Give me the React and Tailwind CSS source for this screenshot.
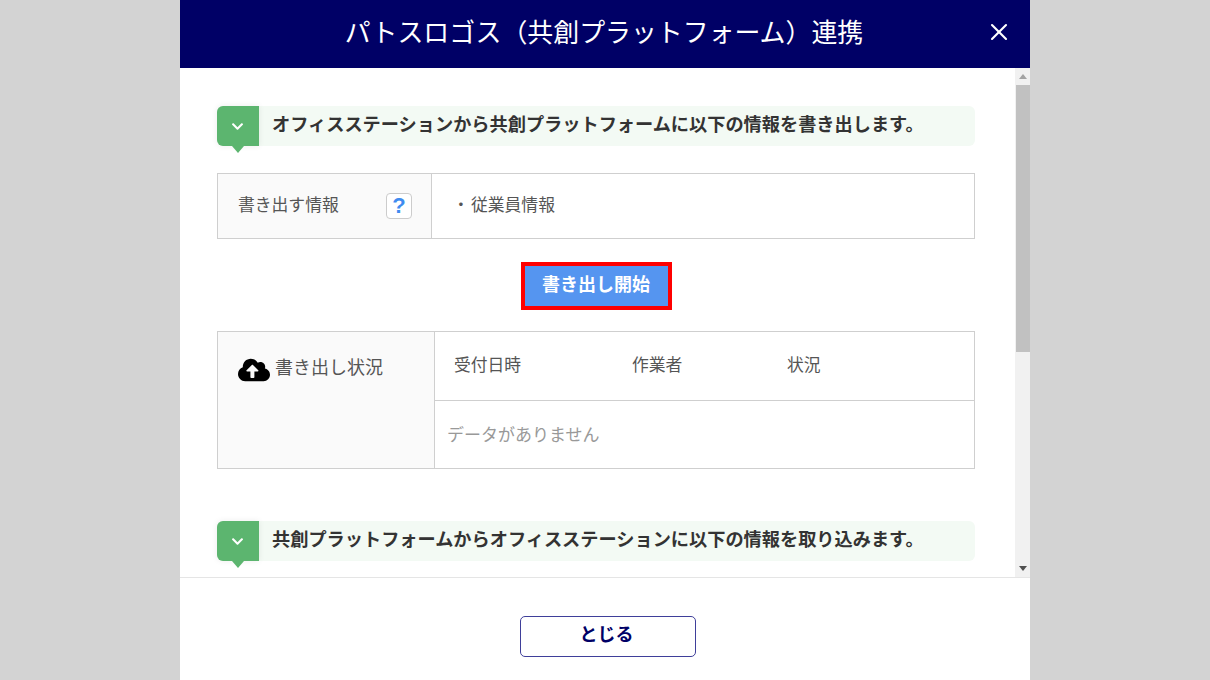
import { FaChevronDown, FaCloudUploadAlt } from "react-icons/fa";
import { X } from "lucide-react";

const font = "font-['Noto_Sans_CJK_JP','Noto_Sans',sans-serif]";

function SectionHead({ children }) {
  return (
    <div className="flex items-center h-10 rounded-md bg-[#f3faf4]">
      <div className="relative flex items-center justify-center w-[41.5px] h-10 rounded-l-md bg-[#5cb56f] shadow-[0_0_6px_rgba(0,0,0,0.08)]">
        <FaChevronDown className="text-white text-[13px]" />
        <div className="absolute left-[15px] top-10 w-0 h-0 border-x-[6px] border-x-transparent border-t-[7px] border-t-[#5cb56f]" />
      </div>
      <div className="ml-[13.5px] pb-[5px] text-[18.2px] font-bold text-[#333] leading-none">
        {children}
      </div>
    </div>
  );
}

function Scrollbar() {
  return (
    <div className="flex flex-col w-[15px] bg-[#f1f1f1]">
      <div className="flex items-center justify-center h-[17px] bg-[#f1f1f1]">
        <div className="w-0 h-0 border-x-4 border-x-transparent border-b-[5px] border-b-[#a3a3a3]" />
      </div>
      <div className="h-[267px] ml-px bg-[#c1c1c1]" />
      <div className="flex-1" />
      <div className="flex items-center justify-center h-[17px]">
        <div className="w-0 h-0 border-x-4 border-x-transparent border-t-[5px] border-t-[#505050]" />
      </div>
    </div>
  );
}

export default function App() {
  return (
    <div className={`flex justify-center w-full h-[680px] overflow-hidden bg-[#d3d3d3] ${font}`}>
      <div className="flex flex-col w-[850px] h-[680px] bg-white">
        <header className="flex items-center justify-center relative h-[68px] shrink-0 pb-[6px] pr-[2px] bg-[#000066]">
          <h1 className="text-[25.9px] font-normal text-white leading-none">
            パトスロゴス（共創プラットフォーム）連携
          </h1>
          <X className="absolute right-[17px] top-[18px] text-white" size={28} strokeWidth={1.8} />
        </header>

        <div className="flex h-[509px] shrink-0">
          <div className="flex-1 min-w-0 overflow-hidden pt-[38px] pl-[37px] pr-[40px]">
            <SectionHead>オフィスステーションから共創プラットフォームに以下の情報を書き出します。</SectionHead>

            <div className="flex h-[66px] mt-[27px] border border-[#cfcfcf] text-[16.8px] text-[#555]">
              <div className="flex items-center justify-between w-[214px] pl-5 pr-[19px] bg-[#fafafa] border-r border-[#cfcfcf]">
                <span className="pb-[3px]">書き出す情報</span>
                <span className="flex items-center justify-center w-[26px] h-[26px] rounded border border-[#ccc] bg-white font-['Liberation_Sans',sans-serif] text-[22px] font-bold text-[#3f8cf0] leading-none">
                  ?
                </span>
              </div>
              <div className="flex items-center pl-[19px] pb-[3px]">
                <span className="w-[20px] text-center">・</span>
                <span>従業員情報</span>
              </div>
            </div>

            <div className="flex justify-center mt-[23px]">
              <button className="w-[151px] h-12 pb-[6px] border-4 border-[#ff0000] bg-[#5595f0] text-[18px] font-bold text-white">
                書き出し開始
              </button>
            </div>

            <div className="flex h-[138px] mt-[21px] border border-[#cfcfcf] text-[16.8px] text-[#555]">
              <div className="flex items-start gap-[5px] w-[217px] pl-5 pt-[22px] bg-[#fafafa] border-r border-[#cfcfcf]">
                <FaCloudUploadAlt className="text-black" size={32} />
                <span className="text-[18px] leading-[26px] mt-[-1px]">書き出し状況</span>
              </div>
              <div className="flex flex-col flex-1">
                <div className="flex items-center h-[69px] pl-[19px] pb-[3px] border-b border-[#cfcfcf]">
                  <span className="w-[178px]">受付日時</span>
                  <span className="w-[155px]">作業者</span>
                  <span>状況</span>
                </div>
                <div className="flex items-center flex-1 pl-3 pb-[2px] text-[17px] text-[#999]">データがありません</div>
              </div>
            </div>

            <div className="mt-[52px]">
              <SectionHead>共創プラットフォームからオフィスステーションに以下の情報を取り込みます。</SectionHead>
            </div>
          </div>
          <Scrollbar />
        </div>

        <footer className="flex justify-center flex-1 pt-[38px] border-t border-[#e5e5e5]">
          <button className="w-[176px] h-[41px] ml-[5px] pb-[6px] pr-[2px] rounded-[5px] border border-[#3f3f9a] bg-white text-[18px] font-bold text-[#000066]">
            とじる
          </button>
        </footer>
      </div>
    </div>
  );
}
